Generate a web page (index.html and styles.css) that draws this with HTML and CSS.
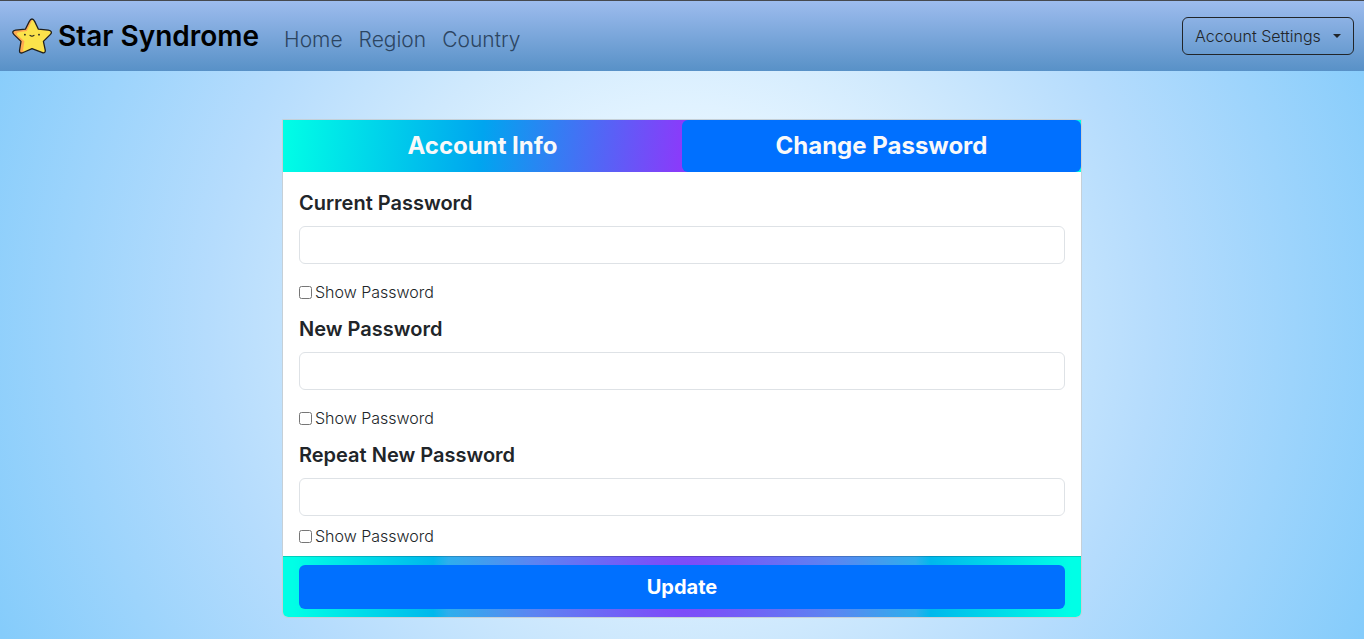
FILE: index.html
```html
<!DOCTYPE html>
<html lang="en">
<head>
<meta charset="utf-8">
<meta name="viewport" content="width=device-width, initial-scale=1">
<title>Star Syndrome</title>
<link rel="stylesheet" href="styles.css">
</head>
<body>
<header class="navbar">
  <a class="brand" href="#">
    <svg class="brand-star" viewBox="0 0 40 36" aria-hidden="true">
      <path d="M20 1c1.500 0 2 1 2.800 2.600l3.600 7.600 10 1c3 .4 4 2.200 1.800 4.400l-6.800 6.800 1.800 8.400c.5 2.800-1 3.700-3.400 2.500L20 30.600l-8.800 3.900c-2.600 1.200-4 .2-3.600-2.500l1.400-8.600-7-6.800c-2.200-2.200-1.400-4 1.600-4.400l9.800-1 3.800-7.600C18 2 18.500 1 20 1z" fill="#fbe34b"/>
      <path d="M20 1c-1.500 0-2 1-2.800 2.600l-3.800 7.600-9.800 1c-3 .4-3.800 2.200-1.600 4.400l7 6.800L7.600 32c-.4 2.700 1 3.700 3.600 2.500l.8-.4c-.8-.6-1-1.500-.8-3l1.200-7.800-6.800-6c-1.400-1.400-.6-2.600 1.200-3l8-1.200 4-8c.4-1 .8-2 1.400-2.800z" fill="#ffa951"/>
      <path d="M20 1c1.500 0 2 1 2.800 2.600l3.600 7.600 10 1c3 .4 4 2.200 1.800 4.400l-6.800 6.800 1.800 8.400c.5 2.800-1 3.700-3.400 2.500L20 30.600l-8.800 3.900c-2.600 1.200-4 .2-3.600-2.500l1.400-8.600-7-6.800c-2.200-2.200-1.400-4 1.600-4.400l9.800-1 3.800-7.600C18 2 18.500 1 20 1z" fill="none" stroke="#20201f" stroke-width="1.300" stroke-linejoin="round"/>
      <circle cx="12.900" cy="16.700" r="0.900" fill="#222"/><circle cx="27" cy="16.700" r="0.900" fill="#222"/>
      <path d="M18 17.300q2 1.700 4 0" fill="none" stroke="#222" stroke-width="1.100" stroke-linecap="round"/>
    </svg>
    <span>Star Syndrome</span>
  </a>
  <nav class="links">
    <a href="#">Home</a>
    <a href="#">Region</a>
    <a href="#">Country</a>
  </nav>
  <button class="settings" type="button">Account Settings<span class="caret"></span></button>
</header>
<main class="page">
  <form class="card">
    <div class="tabs">
      <button class="tab" type="button">Account Info</button>
      <button class="tab active" type="button">Change Password</button>
    </div>
    <div class="fields">
      <div class="field">
        <label class="label" for="current">Current Password</label>
        <input class="input" id="current" type="password">
        <div class="show"><input id="show-current" type="checkbox"><label for="show-current">Show Password</label></div>
      </div>
      <div class="field">
        <label class="label" for="new">New Password</label>
        <input class="input" id="new" type="password">
        <div class="show"><input id="show-new" type="checkbox"><label for="show-new">Show Password</label></div>
      </div>
      <div class="field compact">
        <label class="label" for="repeat">Repeat New Password</label>
        <input class="input" id="repeat" type="password">
        <div class="show"><input id="show-repeat" type="checkbox"><label for="show-repeat">Show Password</label></div>
      </div>
    </div>
    <div class="footer"><button class="update" type="submit">Update</button></div>
  </form>
</main>
</body>
</html>
```
FILE: styles.css
```css
* { box-sizing: border-box; }
body {
  margin: 0;
  min-height: 100vh;
  font-family: Inter, "Open Sans", sans-serif;
  font-size: 16px;
  font-weight: 300;
  line-height: 24px;
  color: #212529;
  background: radial-gradient(circle at center, #ffffff 0, #e0f2ff 215px, #cfe9fd 320px, #b5dcfd 475px, #85ccfb 750px);
}
a { color: inherit; text-decoration: none; }
button, input { font: inherit; }
.navbar {
  display: flex;
  align-items: center;
  padding: 13px 10px 13px 12px;
  border-top: 1px solid #46494f;
  background: linear-gradient(#9dbcee, #5891c7);
}
.brand {
  display: flex;
  align-items: center;
  gap: 6px;
  margin-right: 25px;
  font-size: 28px;
  font-weight: 600;
  line-height: 44px;
  color: #000;
}
.brand-star { width: 40px; height: 36px; }
.links {
  display: flex;
  gap: 16px;
  padding-top: 8px;
  font-size: 21px;
  line-height: 28px;
  color: #2c4562;
}
.settings {
  display: flex;
  align-items: center;
  justify-content: space-between;
  min-width: 172px;
  margin-left: auto;
  padding: 6px 12px;
  border: 1px solid #212529;
  border-radius: 6px;
  background: none;
  color: #212529;
}
.caret {
  border: 4px solid transparent;
  border-top-color: currentColor;
  border-bottom: 0;
}
.page { padding: 48px 16px 22px; }
.card {
  max-width: 800px;
  margin: 0 auto;
  overflow: hidden;
  border: 1px solid #c5d0d8;
  border-radius: 0 0 6px 6px;
  background: #fff;
  background-clip: padding-box;
}
.tabs {
  display: grid;
  grid-template-columns: 1fr 1fr;
  background: linear-gradient(95deg, #00ffe6, #00a5ef 25%, #8a3bfa 50%, #00a5ef 75%, #00ffe6);
}
.tab {
  padding: 8px 16px;
  border: 0;
  border-radius: 6px;
  background: none;
  color: #f8f9fa;
  font-size: 24px;
  font-weight: 700;
  line-height: 36px;
}
.tab.active { background: #0070ff; }
.fields { padding: 16px 16px 8px; }
.field { display: flex; flex-direction: column; padding-bottom: 10px; }
.label {
  margin-bottom: 8px;
  font-size: 20px;
  font-weight: 600;
  line-height: 30px;
}
.input {
  width: 100%;
  height: 38px;
  padding: 6px 12px;
  border: 1px solid #dee2e6;
  border-radius: 6px;
  background: #fff;
}
.show {
  display: flex;
  align-items: center;
  gap: 3px;
  margin-top: 16px;
}
.show input { width: 13px; height: 13px; margin: 0; }
.compact { padding-bottom: 0; }
.compact .show { margin-top: 8px; }
.footer {
  padding: 8px 16px;
  border-top: 1px solid rgba(0, 0, 0, 0.18);
  background: radial-gradient(circle at center, #8342fa 0, #5c84f2 150px, #2eaeed 235px, #00b8ec 250px, #00ffe6 390px);
}
.update {
  width: 100%;
  padding: 7px 16px;
  border: 0;
  border-radius: 6px;
  background: #0070ff;
  color: #fff;
  font-size: 20px;
  font-weight: 700;
  line-height: 30px;
}
```
